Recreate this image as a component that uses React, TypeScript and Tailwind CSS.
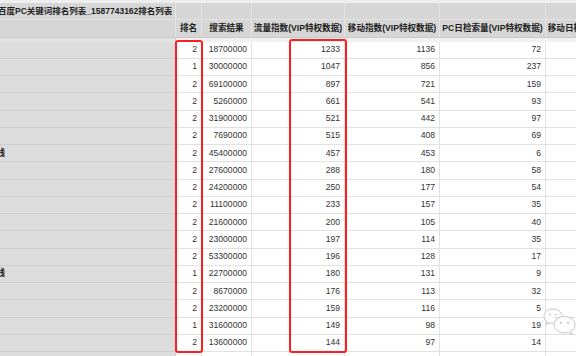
const cols = [176, 26, 50, 93, 95, 106, 110];

const rows: [string, string, string, string, string, string][] = [
  ['', '2', '18700000', '1233', '1136', '72'],
  ['', '1', '30000000', '1047', '856', '237'],
  ['', '2', '69100000', '897', '721', '159'],
  ['', '2', '5260000', '661', '541', '93'],
  ['', '2', '31900000', '521', '442', '97'],
  ['', '2', '7690000', '515', '408', '69'],
  ['线', '2', '45400000', '457', '453', '6'],
  ['', '2', '27600000', '288', '180', '58'],
  ['', '2', '24200000', '250', '177', '54'],
  ['', '2', '11100000', '233', '157', '35'],
  ['', '2', '21600000', '200', '105', '40'],
  ['', '2', '23000000', '197', '114', '35'],
  ['', '2', '53300000', '196', '128', '17'],
  ['线', '1', '22700000', '180', '131', '9'],
  ['', '2', '8670000', '176', '113', '32'],
  ['', '2', '23200000', '159', '116', '5'],
  ['', '1', '31600000', '149', '98', '19'],
  ['', '2', '13600000', '144', '97', '14'],
  ['', '', '', '', '', ''],
];

const headers = ['排名', '搜索结果', '流量指数(VIP特权数据)', '移动指数(VIP特权数据)', 'PC日检索量(VIP特权数据)', '移动日检索量(VIP特权数据)'];

const font = { fontFamily: '"Liberation Sans", "Noto Sans CJK SC", sans-serif' };

function WeChatMark() {
  return (
    <svg width="34" height="30" viewBox="0 0 34 30" fill="none">
      <path d="M10 2C4.8 2 1 5.2 1 9.2c0 2.3 1.2 4.2 3.2 5.5L3.4 17.6l3.4-1.8c1 .3 2 .4 3.2.4" fill="#fff" stroke="#c4c4c4" strokeWidth="1" />
      <path d="M10 2c5 0 8.8 3 9 6.8" stroke="#c4c4c4" strokeWidth="1" />
      <circle cx="7" cy="7.6" r="0.9" fill="#c4c4c4" />
      <circle cx="13" cy="7.6" r="0.9" fill="#c4c4c4" />
      <path d="M21.5 9.5c-6 0-10.5 3.6-10.5 8.2s4.5 8.2 10.5 8.2c1.3 0 2.5-.2 3.6-.5l3.6 2-.9-3.3c2.6-1.5 4.2-3.8 4.2-6.4 0-4.6-4.5-8.2-10.5-8.2z" fill="#fff" stroke="#c4c4c4" strokeWidth="1" />
      <circle cx="18" cy="15.8" r="1" fill="#c4c4c4" />
      <circle cx="25" cy="15.8" r="1" fill="#c4c4c4" />
    </svg>
  );
}

export default function App() {
  return (
    <div className="relative w-[576px] h-[356px] overflow-hidden bg-white" style={font}>
      <div className="h-[3px] bg-[#eeeeee]" />

      {/* header row 1 */}
      <div className="flex h-[17px] bg-[#d6d6d6] border-b border-[#e2e2e2]">
        {cols.map((w, i) => (
          <div key={i} className="shrink-0 h-full border-r border-[#e4e4e4] flex items-center" style={{ width: w }}>
            {i === 0 && (
              <span className="-ml-[2px] whitespace-nowrap text-[8.5px] font-bold text-[#222]">百度PC关键词排名列表_1587743162排名列表</span>
            )}
          </div>
        ))}
      </div>

      {/* header row 2 */}
      <div className="flex h-[18px] bg-[#d6d6d6] border-b border-[#c9c9c9]">
        {cols.map((w, i) => (
          <div key={i} className="shrink-0 h-full border-r border-[#e4e4e4] flex items-center justify-center overflow-hidden" style={{ width: w }}>
            {i > 0 && (
              <span className="whitespace-nowrap text-[8.6px] font-bold text-[#222]">{headers[i - 1]}</span>
            )}
          </div>
        ))}
      </div>

      <div className="flex h-[3.5px]">
        <div className="w-[176px] shrink-0 bg-[#e2e2e2] border-r border-[#cfcfcf]" />
        <div className="flex-1 bg-[#f1f1f1]" />
      </div>

      {rows.map((r, ri) => (
        <div key={ri} className="flex h-[17.25px]">
          <div className="w-[176px] shrink-0 bg-[#dcdcdc] border-r border-b border-[#cecece] flex items-center overflow-hidden">
            {r[0] && <span className="-ml-[3.5px] text-[8.6px] font-bold text-[#222]">{r[0]}</span>}
          </div>
          {cols.slice(1).map((w, ci) => (
            <div
              key={ci}
              className="shrink-0 h-full border-r border-b border-[#e2e2e2] flex items-center justify-end pr-[4px] text-[8.6px] text-[#333]"
              style={{ width: w }}
            >
              {r[ci + 1] ?? ''}
            </div>
          ))}
        </div>
      ))}

      {/* red highlight boxes */}
      <div className="absolute left-[175px] top-[39.5px] w-[28px] h-[313px] border-2 border-[#ff1e1e] rounded-[3px]" />
      <div className="absolute left-[289px] top-[38.5px] w-[58px] h-[314px] border-2 border-[#ff1e1e] rounded-[3px]" />

      <div className="absolute left-[543px] top-[307px]">
        <WeChatMark />
      </div>
    </div>
  );
}
